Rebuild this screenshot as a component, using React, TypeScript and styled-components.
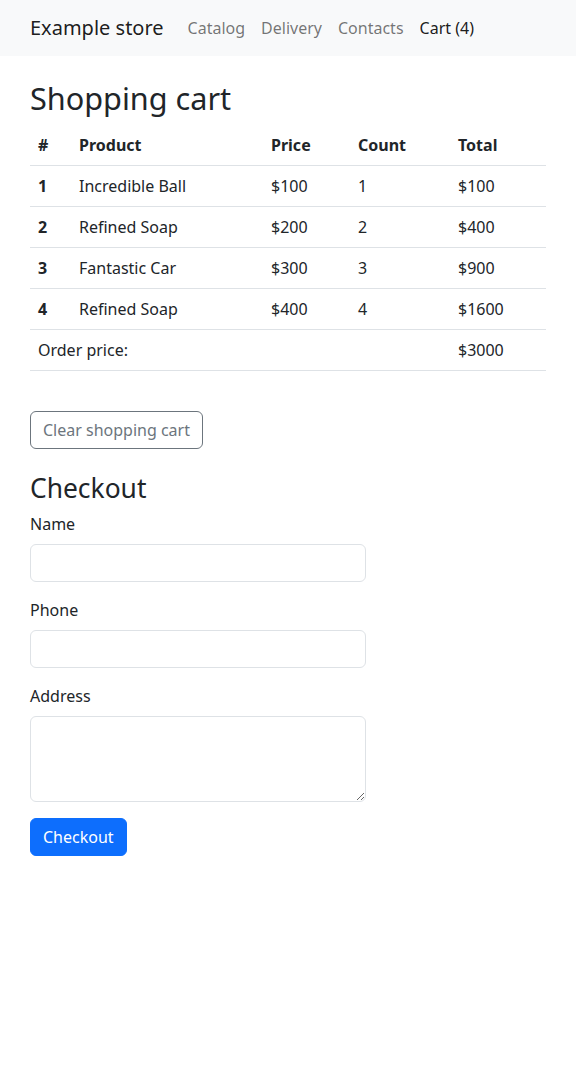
import React from "react";
import styled, { createGlobalStyle } from "styled-components";

const Global = createGlobalStyle`
  * { box-sizing: border-box; }
  body {
    margin: 0;
    font-family: "Noto Sans", "Liberation Sans", Arial, sans-serif;
    font-size: 16px;
    line-height: 1.5;
    color: #212529;
    background: #fff;
  }
`;

const Navbar = styled.nav`
  background: #f8f9fa;
  padding: 8px 0;
`;

const Container = styled.div`
  max-width: 540px;
  margin: 0 auto;
  padding: 0 12px;
`;

const NavInner = styled(Container)`
  display: flex;
  align-items: center;
`;

const Brand = styled.a`
  font-size: 20px;
  line-height: 30px;
  padding: 5px 0;
  margin-right: 16px;
  color: rgba(0, 0, 0, 0.9);
  text-decoration: none;
`;

const NavLink = styled.a<{ $active?: boolean }>`
  padding: 8px;
  line-height: 24px;
  color: ${(p) => (p.$active ? "rgba(0,0,0,0.9)" : "rgba(0,0,0,0.55)")};
  text-decoration: none;
`;

const Main = styled(Container)`
  padding-top: 24px;
`;

const H1 = styled.h1`
  font-size: 30.64px;
  font-weight: 400;
  line-height: 1.2;
  margin: 0 0 8px;
`;

const H2 = styled.h2`
  font-size: 26.4px;
  font-weight: 400;
  line-height: 1.2;
  margin: 24px 0 8px;
`;

const Table = styled.table`
  width: 100%;
  border-collapse: collapse;
  margin-bottom: 16px;
`;

const Th = styled.th<{ $w?: number }>`
  text-align: left;
  font-weight: 700;
  padding: 8px;
  border-bottom: 1px solid #dee2e6;
  width: ${(p) => (p.$w ? `${p.$w}px` : "auto")};
`;

const Td = styled.td`
  padding: 8px;
  border-bottom: 1px solid #dee2e6;
`;

const OutlineButton = styled.button`
  font-family: inherit;
  font-size: 16px;
  line-height: 24px;
  padding: 6px 12px;
  border: 1px solid #6c757d;
  color: #6c757d;
  background: transparent;
  border-radius: 6px;
  margin-top: 24px;
`;

const Form = styled.form`
  width: 336px;
`;

const Field = styled.div`
  margin-bottom: 16px;
`;

const Label = styled.label`
  display: block;
  margin-bottom: 8px;
`;

const Input = styled.input`
  display: block;
  width: 100%;
  height: 38px;
  font-family: inherit;
  font-size: 16px;
  line-height: 24px;
  padding: 6px 12px;
  border: 1px solid #dee2e6;
  border-radius: 6px;
`;

const TextArea = styled.textarea`
  display: block;
  width: 100%;
  height: 86px;
  font-family: inherit;
  font-size: 16px;
  line-height: 24px;
  padding: 6px 12px;
  border: 1px solid #dee2e6;
  border-radius: 6px;
`;

const PrimaryButton = styled.button`
  font-family: inherit;
  font-size: 16px;
  line-height: 24px;
  padding: 6px 12px;
  border: 1px solid #0d6efd;
  background: #0d6efd;
  color: #fff;
  border-radius: 6px;
`;

const items = [
  { name: "Incredible Ball", price: 100, count: 1 },
  { name: "Refined Soap", price: 200, count: 2 },
  { name: "Fantastic Car", price: 300, count: 3 },
  { name: "Refined Soap", price: 400, count: 4 },
];

export default function App() {
  const total = items.reduce((s, i) => s + i.price * i.count, 0);
  return (
    <>
      <Global />
      <Navbar>
        <NavInner>
          <Brand href="#">Example store</Brand>
          <NavLink href="#">Catalog</NavLink>
          <NavLink href="#">Delivery</NavLink>
          <NavLink href="#">Contacts</NavLink>
          <NavLink href="#" $active>Cart (4)</NavLink>
        </NavInner>
      </Navbar>
      <Main>
        <H1>Shopping cart</H1>
        <Table>
          <thead>
            <tr>
              <Th $w={41}>#</Th>
              <Th $w={192}>Product</Th>
              <Th $w={87}>Price</Th>
              <Th $w={100}>Count</Th>
              <Th>Total</Th>
            </tr>
          </thead>
          <tbody>
            {items.map((it, i) => (
              <tr key={i}>
                <Th scope="row">{i + 1}</Th>
                <Td>{it.name}</Td>
                <Td>${it.price}</Td>
                <Td>{it.count}</Td>
                <Td>${it.price * it.count}</Td>
              </tr>
            ))}
            <tr>
              <Td colSpan={4}>Order price:</Td>
              <Td>${total}</Td>
            </tr>
          </tbody>
        </Table>
        <OutlineButton type="button">Clear shopping cart</OutlineButton>
        <H2>Checkout</H2>
        <Form onSubmit={(e) => e.preventDefault()}>
          <Field>
            <Label>Name</Label>
            <Input type="text" />
          </Field>
          <Field>
            <Label>Phone</Label>
            <Input type="text" />
          </Field>
          <Field>
            <Label>Address</Label>
            <TextArea />
          </Field>
          <PrimaryButton type="submit">Checkout</PrimaryButton>
        </Form>
      </Main>
    </>
  );
}
